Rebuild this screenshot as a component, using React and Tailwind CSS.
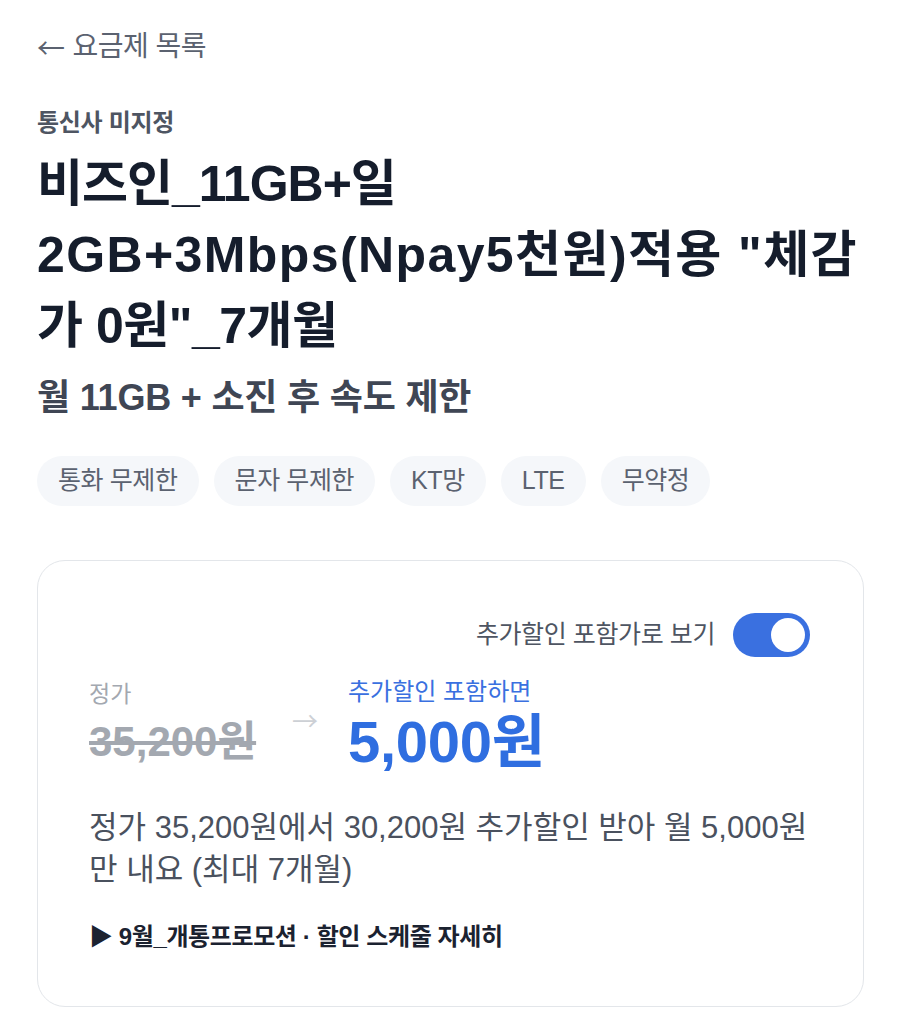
import React, { useState } from 'react';

const font = { fontFamily: '"Liberation Sans", "Noto Sans CJK KR", sans-serif' };

const chips = ['통화 무제한', '문자 무제한', 'KT망', 'LTE', '무약정'];

function Toggle({ on, onChange }) {
    return (
        <button
            onClick={() => onChange(!on)}
            className={`w-[77px] h-[44px] rounded-full px-[5px] flex items-center ${on ? 'bg-[#3a70e0] justify-end' : 'bg-gray-300 justify-start'}`}
        >
            <span className="w-[34px] h-[34px] rounded-full bg-white block" />
        </button>
    );
}

export default function App() {
    const [withDiscount, setWithDiscount] = useState(true);

    return (
        <div style={font} className="w-[900px] min-h-[1028px] bg-white px-[37px] pt-[28px] text-[#18202e]">
            {/* back link */}
            <div className="h-[38px] flex items-center text-[28px] text-[#5b6270] tracking-[-0.5px]">
                <span className="font-['Noto_Sans_CJK_KR'] leading-none">←</span>
                <span className="ml-[8px] leading-[38px]">요금제 목록</span>
            </div>

            <div className="mt-[41px] text-[24px] leading-[32px] font-bold text-[#4e5562] tracking-[-0.3px]">통신사 미지정</div>

            <h1 className="mt-[10px] text-[50px] leading-[71px] font-bold text-[#151d2c] whitespace-nowrap">
                <span className="block tracking-[-1px]">비즈인_11GB+일</span>
                <span className="block tracking-[1.4px]">2GB+3Mbps(Npay5천원)적용 "체감</span>
                <span className="block tracking-[-0.5px]">가 0원"_7개월</span>
            </h1>

            <div className="mt-[13px] text-[36px] leading-[46px] font-bold text-[#3f4654] tracking-[-0.2px]">월 11GB + 소진 후 속도 제한</div>

            <div className="mt-[35px] flex gap-[15px]">
                {chips.map(c => (
                    <span key={c} className="h-[50px] px-[21px] rounded-full bg-[#f5f7fa] flex items-center text-[25px] text-[#5b6270] tracking-[-0.4px]">{c}</span>
                ))}
            </div>

            <div className="mt-[54px] w-[827px] rounded-[28px] border border-[#e3e6ea] bg-white pl-[51px] pr-[53px] pt-[52px] pb-[53px]">
                <div className="flex items-center justify-end gap-[18px]">
                    <span className="text-[25px] text-[#4e5562] tracking-[-0.4px]">추가할인 포함가로 보기</span>
                    <Toggle on={withDiscount} onChange={setWithDiscount} />
                </div>

                <div className="mt-[19px] flex items-start">
                    <div className="w-[200px] mt-[2px] flex flex-col">
                        <span className="text-[23px] leading-[32px] text-[#a3a8b0]">정가</span>
                        <span className="mt-[6px] text-[42px] leading-[52px] font-bold text-[#a3a8b0] line-through">35,200원</span>
                    </div>
                    <span className="w-[59px] mt-[28px] pl-[3px] font-['Noto_Sans_CJK_KR'] text-[26px] leading-[32px] text-[#cdd0d5]">→</span>
                    <div className="flex flex-col">
                        <span className="text-[24px] leading-[32px] text-[#3a70e0]">추가할인 포함하면</span>
                        <span className="mt-[4px] text-[58px] leading-[60px] font-bold text-[#2f6ee0] tracking-[-0.3px]">5,000원</span>
                    </div>
                </div>

                <p className="mt-[35px] text-[31px] leading-[42px] text-[#4a515e] whitespace-nowrap">
                    정가 35,200원에서 30,200원 추가할인 받아 월 5,000원<br />
                    만 내요 (최대 7개월)
                </p>

                <div className="mt-[30px] text-[24px] leading-[32px] font-bold text-[#1b2230] tracking-[-0.4px]">▶ 9월_개통프로모션 · 할인 스케줄 자세히</div>
            </div>
        </div>
    );
}
